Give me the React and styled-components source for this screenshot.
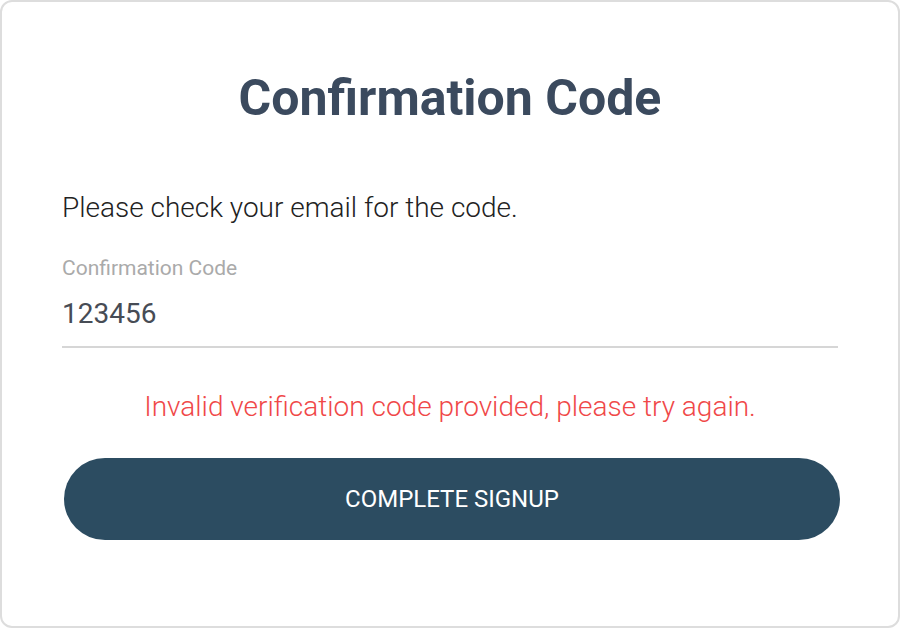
import styled, { createGlobalStyle } from "styled-components"

const GlobalStyle = createGlobalStyle`
  html, body {
    margin: 0;
    padding: 0;
    background: #ffffff;
  }
  * {
    box-sizing: border-box;
  }
`

const Card = styled.div`
  width: 900px;
  height: 628px;
  border: 2px solid #dddddd;
  border-radius: 12px;
  background: #ffffff;
  padding: 0 60px;
  font-family: Roboto, "Liberation Sans", sans-serif;
  display: flex;
  flex-direction: column;
`

const Title = styled.h1`
  margin: 66px 0 0;
  font-size: 50px;
  line-height: 60px;
  font-weight: 700;
  color: #3b4a5e;
  text-align: center;
`

const Intro = styled.p`
  margin: 64px 0 0;
  font-size: 28px;
  line-height: 32px;
  font-weight: 300;
  color: #222222;
`

const Field = styled.label`
  display: flex;
  flex-direction: column;
  margin-top: 32px;
  border-bottom: 2px solid #d6d6d6;
  padding-bottom: 16px;
`

const FieldLabel = styled.span`
  font-size: 21px;
  line-height: 24px;
  font-weight: 400;
  color: #aaaaaa;
`

const FieldValue = styled.span`
  margin-top: 18px;
  font-size: 28px;
  line-height: 32px;
  font-weight: 400;
  color: #474c55;
`

const ErrorText = styled.p`
  margin: 43px 0 0;
  font-size: 28px;
  line-height: 32px;
  font-weight: 300;
  color: #f04848;
  text-align: center;
`

const SubmitButton = styled.button`
  margin: 35px 0 0 2px;
  height: 82px;
  width: 776px;
  border: none;
  border-radius: 41px;
  background: #2c4c61;
  color: #ffffff;
  font-family: Roboto, "Liberation Sans", sans-serif;
  font-size: 24px;
  font-weight: 400;
  text-transform: uppercase;
`

export default function App() {
  return (
    <>
      <GlobalStyle />
      <Card>
        <Title>Confirmation Code</Title>
        <Intro>Please check your email for the code.</Intro>
        <Field>
          <FieldLabel>Confirmation Code</FieldLabel>
          <FieldValue>123456</FieldValue>
        </Field>
        <ErrorText>Invalid verification code provided, please try again.</ErrorText>
        <SubmitButton>Complete Signup</SubmitButton>
      </Card>
    </>
  )
}
